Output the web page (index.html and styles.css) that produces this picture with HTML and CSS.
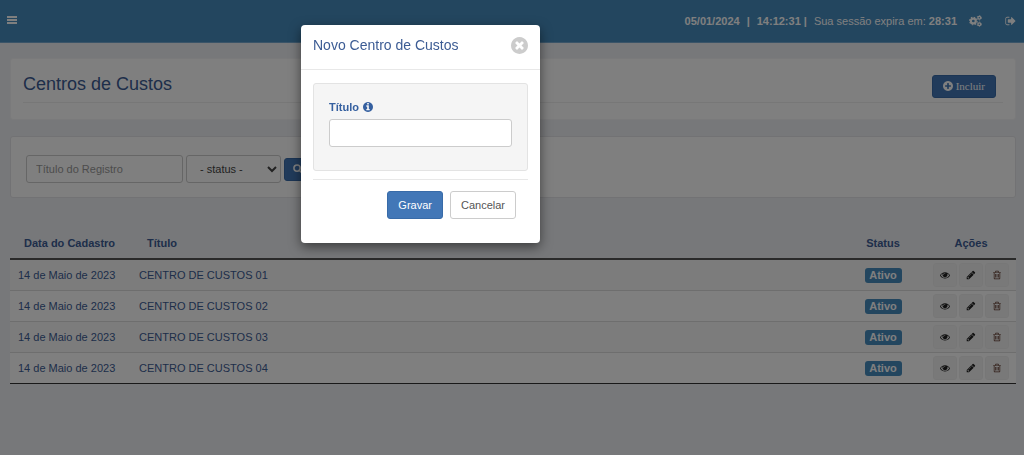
FILE: index.html
```html
<!DOCTYPE html>
<html lang="pt-BR">
<head>
<meta charset="utf-8">
<title>Centros de Custos</title>
<link rel="stylesheet" href="styles.css">
</head>
<body>
<svg class="sprite" aria-hidden="true">
  <symbol id="bars" viewBox="0 0 10 9"><path d="M0 0h10v2H0zM0 3h10v2H0zM0 6h10v2H0z"/></symbol>
  <symbol id="plus" viewBox="128 128 1536 1536"><path d="M1344 960v-128q0-26-19-45t-45-19h-256v-256q0-26-19-45t-45-19h-128q-26 0-45 19t-19 45v256h-256q-26 0-45 19t-19 45v128q0 26 19 45t45 19h256v256q0 26 19 45t45 19h128q26 0 45-19t19-45v-256h256q26 0 45-19t19-45zm320-64q0 209-103 385.5t-279.5 279.5-385.5 103-385.5-103-279.5-279.5-103-385.5 103-385.5 279.5-279.5 385.5-103 385.5 103 279.5 279.5 103 385.5z"/></symbol>
  <symbol id="times" viewBox="128 128 1536 1536"><path d="M1277 1122q0-26-19-45l-181-181 181-181q19-19 19-45 0-27-19-46l-90-90q-19-19-46-19-26 0-45 19l-181 181-181-181q-19-19-45-19-27 0-46 19l-90 90q-19 19-19 46 0 26 19 45l181 181-181 181q-19 19-19 45 0 27 19 46l90 90q19 19 46 19 26 0 45-19l181-181 181 181q19 19 45 19 27 0 46-19l90-90q19-19 19-46zm387-226q0 209-103 385.5t-279.5 279.5-385.5 103-385.5-103-279.5-279.5-103-385.5 103-385.5 279.5-279.5 385.5-103 385.5 103 279.5 279.5 103 385.5z"/></symbol>
  <symbol id="info" viewBox="128 128 1536 1536"><path d="M1152 1376v-160q0-14-9-23t-23-9h-96v-512q0-14-9-23t-23-9h-320q-14 0-23 9t-9 23v160q0 14 9 23t23 9h96v320h-96q-14 0-23 9t-9 23v160q0 14 9 23t23 9h448q14 0 23-9t9-23zm-128-896v-160q0-14-9-23t-23-9h-192q-14 0-23 9t-9 23v160q0 14 9 23t23 9h192q14 0 23-9t9-23zm640 416q0 209-103 385.5t-279.5 279.5-385.5 103-385.5-103-279.5-279.5-103-385.5 103-385.5 279.5-279.5 385.5-103 385.5 103 279.5 279.5 103 385.5z"/></symbol>
  <symbol id="eye" viewBox="0 0 1792 1792"><path d="M1664 960q-152-236-381-353 61 104 61 225 0 185-131.5 316.5t-316.5 131.5-316.5-131.5-131.5-316.5q0-121 61-225-229 117-381 353 133 205 333.5 326.5t434.5 121.5 434.5-121.5 333.5-326.5zm-720-384q0-20-14-34t-34-14q-125 0-214.5 89.5t-89.5 214.5q0 20 14 34t34 14 34-14 14-34q0-86 61-147t147-61q20 0 34-14t14-34zm848 384q0 34-20 69-140 230-376.5 368.5t-499.5 138.5-499.5-139-376.5-368q-20-35-20-69t20-69q140-229 376.5-368t499.5-139 499.5 139 376.5 368q20 35 20 69z"/></symbol>
  <symbol id="pencil" viewBox="0 0 1792 1792"><path d="M491 1536l91-91-235-235-91 91v107h128v128h107zm523-928q0-22-22-22-10 0-17 7l-542 542q-7 7-7 17 0 22 22 22 10 0 17-7l542-542q7-7 7-17zm-54-192l416 416-832 832h-416v-416zm683 96q0 53-37 90l-166 166-416-416 166-165q36-38 90-38 53 0 91 38l235 234q37 39 37 91z"/></symbol>
  <symbol id="trash" viewBox="0 0 1792 1792"><path d="M704 736v576q0 14-9 23t-23 9h-64q-14 0-23-9t-9-23v-576q0-14 9-23t23-9h64q14 0 23 9t9 23zm256 0v576q0 14-9 23t-23 9h-64q-14 0-23-9t-9-23v-576q0-14 9-23t23-9h64q14 0 23 9t9 23zm256 0v576q0 14-9 23t-23 9h-64q-14 0-23-9t-9-23v-576q0-14 9-23t23-9h64q14 0 23 9t9 23zm128 724v-948h-896v948q0 22 7 40.5t14.5 27 10.5 8.5h832q3 0 10.5-8.5t14.5-27 7-40.5zm-672-1076h448l-48-117q-7-9-17-11h-317q-10 2-17 11zm928 32v64q0 14-9 23t-23 9h-96v948q0 83-47 143.5t-113 60.5h-832q-66 0-113-58.5t-47-141.5v-952h-96q-14 0-23-9t-9-23v-64q0-14 9-23t23-9h309l70-167q15-37 54-63t79-26h320q40 0 79 26t54 63l70 167h309q14 0 23 9t9 23z"/></symbol>
  <symbol id="exit" viewBox="64 128 1600 1536"><path d="M704 1440q0 4 1 20t.5 26.5-3 23.5-10 19.5-20.5 6.5h-320q-119 0-203.5-84.5t-84.5-203.5v-704q0-119 84.5-203.5t203.5-84.5h320q13 0 22.5 9.5t9.5 22.5q0 4 1 20t.5 26.5-3 23.5-10 19.5-20.5 6.5h-320q-66 0-113 47t-47 113v704q0 66 47 113t113 47h312l11.5 1 11.5 3 8 5.500 7 9 2 13.500zm928-544q0 26-19 45l-544 544q-19 19-45 19t-45-19-19-45v-288h-448q-26 0-45-19t-19-45v-384q0-26 19-45t45-19h448v-288q0-26 19-45t45-19 45 19l544 544q19 19 19 45z"/></symbol>
  <symbol id="search" viewBox="0 0 16 16"><g fill="none" stroke="currentColor" stroke-width="2.500"><circle cx="6.500" cy="6.500" r="5"/><path d="M10 10l5 5" stroke-linecap="round"/></g></symbol>
  <symbol id="cogs" viewBox="0 0 24 22"><g fill="none" stroke="currentColor"><circle cx="8" cy="11" r="4.500" stroke-width="4"/><circle cx="8" cy="11" r="7" stroke-width="2" stroke-dasharray="2.750"/><circle cx="19" cy="5" r="2.600" stroke-width="2.400"/><circle cx="19" cy="5" r="4.200" stroke-width="1.400" stroke-dasharray="2.200"/><circle cx="19" cy="17" r="2.600" stroke-width="2.400"/><circle cx="19" cy="17" r="4.200" stroke-width="1.400" stroke-dasharray="2.200"/></g></symbol>
</svg>

<header class="topbar">
  <button class="plain" type="button" aria-label="Menu"><svg class="icon-bars"><use href="#bars"/></svg></button>
  <div class="session">
    <b>05/01/2024</b><b>|</b><b>14:12:31 |</b><span>Sua sessão expira em: <b>28:31</b></span>
  </div>
  <a class="top-link" href="#config" aria-label="Configurações"><svg class="icon-cogs"><use href="#cogs"/></svg></a>
  <a class="top-link" href="#sair" aria-label="Sair"><svg class="icon-exit"><use href="#exit"/></svg></a>
</header>

<main class="content">
  <section class="panel heading">
    <div class="heading-row">
      <h1>Centros de Custos</h1>
      <button class="primary include" type="button"><svg class="icon"><use href="#plus"/></svg>Incluir</button>
    </div>
  </section>

  <form class="panel filter">
    <input class="field search-field" type="text" placeholder="Título do Registro" aria-label="Título do Registro">
    <select class="field status-field" aria-label="Status"><option>- status -</option></select>
    <button class="primary search" type="button" aria-label="Pesquisar"><svg class="icon"><use href="#search"/></svg></button>
  </form>

  <table class="records">
    <thead>
      <tr><th class="date">Data do Cadastro</th><th class="name">Título</th><th class="status">Status</th><th class="actions">Ações</th></tr>
    </thead>
    <tbody>
      <tr><td>14 de Maio de 2023</td><td>CENTRO DE CUSTOS 01</td><td class="status"><span class="badge">Ativo</span></td><td class="actions"><div class="tools"><button type="button" aria-label="Ver"><svg class="icon"><use href="#eye"/></svg></button><button type="button" aria-label="Editar"><svg class="icon"><use href="#pencil"/></svg></button><button class="delete" type="button" aria-label="Excluir"><svg class="icon"><use href="#trash"/></svg></button></div></td></tr>
      <tr><td>14 de Maio de 2023</td><td>CENTRO DE CUSTOS 02</td><td class="status"><span class="badge">Ativo</span></td><td class="actions"><div class="tools"><button type="button" aria-label="Ver"><svg class="icon"><use href="#eye"/></svg></button><button type="button" aria-label="Editar"><svg class="icon"><use href="#pencil"/></svg></button><button class="delete" type="button" aria-label="Excluir"><svg class="icon"><use href="#trash"/></svg></button></div></td></tr>
      <tr><td>14 de Maio de 2023</td><td>CENTRO DE CUSTOS 03</td><td class="status"><span class="badge">Ativo</span></td><td class="actions"><div class="tools"><button type="button" aria-label="Ver"><svg class="icon"><use href="#eye"/></svg></button><button type="button" aria-label="Editar"><svg class="icon"><use href="#pencil"/></svg></button><button class="delete" type="button" aria-label="Excluir"><svg class="icon"><use href="#trash"/></svg></button></div></td></tr>
      <tr><td>14 de Maio de 2023</td><td>CENTRO DE CUSTOS 04</td><td class="status"><span class="badge">Ativo</span></td><td class="actions"><div class="tools"><button type="button" aria-label="Ver"><svg class="icon"><use href="#eye"/></svg></button><button type="button" aria-label="Editar"><svg class="icon"><use href="#pencil"/></svg></button><button class="delete" type="button" aria-label="Excluir"><svg class="icon"><use href="#trash"/></svg></button></div></td></tr>
    </tbody>
  </table>
</main>

<div class="backdrop"></div>
<form class="modal" role="dialog" aria-labelledby="modal-title">
  <div class="modal-head">
    <h2 id="modal-title">Novo Centro de Custos</h2>
    <button class="plain close" type="button" aria-label="Fechar"><svg class="icon-close"><use href="#times"/></svg></button>
  </div>
  <div class="modal-body">
    <div class="well">
      <label for="titulo">Título <svg class="icon"><use href="#info"/></svg></label>
      <input class="field" id="titulo" type="text">
    </div>
    <div class="modal-foot">
      <button class="primary" type="button">Gravar</button>
      <button class="secondary" type="button">Cancelar</button>
    </div>
  </div>
</form>
</body>
</html>
```
FILE: styles.css
```css
* { box-sizing: border-box; }

body {
  margin: 0;
  background: #eef0f4;
  color: #3c5c94;
  font: 11px/16px "Liberation Sans", Arial, sans-serif;
}

button, input, select { font: inherit; }
button { cursor: pointer; }
svg { display: block; fill: currentColor; }
h1, h2 { margin: 0; font-weight: 400; }

.sprite { position: absolute; width: 0; height: 0; }
.icon { width: 10px; height: 10px; }
.icon-bars { width: 10px; height: 9px; }
.icon-cogs { width: 13px; height: 12px; }
.icon-exit { width: 11px; height: 10px; }
.icon-close { width: 17px; height: 17px; }

.plain { padding: 0; border: 0; background: none; color: inherit; }

.topbar {
  display: flex;
  align-items: center;
  height: 43px;
  padding: 0 8px 1px 7px;
  border-bottom: 1px solid #75a9d0;
  background: #468cbe;
  color: #fff;
}
.session { display: flex; gap: 7px; margin-left: auto; }
.top-link { margin-left: 12px; color: inherit; }
.top-link + .top-link { margin-left: 23px; }

.content { padding: 15px 8px 16px 10px; }

.panel { border: 1px solid #f4f5f7; border-radius: 3px; background: #fff; }
.heading { padding: 11px 12px 16px; }
.heading-row {
  display: flex;
  align-items: center;
  justify-content: space-between;
  height: 33px;
  padding-right: 7px;
  border-bottom: 1px solid #eee;
}
.heading h1 { padding-bottom: 4px; font-size: 18px; line-height: 24px; }

.primary, .secondary {
  border: 1px solid #386ba8;
  border-radius: 3px;
  background: #4277b7;
  color: #fff;
}
.secondary { border-color: #ccc; background: #fff; color: #555; }
.include {
  display: flex;
  align-items: center;
  gap: 3px;
  height: 23px;
  padding: 0 10px;
  font-family: "Liberation Serif", serif;
}

.filter {
  display: flex;
  align-items: center;
  gap: 3px;
  margin-top: 16px;
  padding: 18px 15px 14px;
  border-color: #e4e5e8;
}
.field {
  height: 28px;
  padding: 0 9px;
  border: 1px solid #ccc;
  border-radius: 3px;
  background: #fff;
  color: #555;
}
.field::placeholder { color: #999; opacity: 1; }
.search-field { width: 157px; }
.status-field { width: 95px; padding: 0 0 0 9px; color: #444; }
.search { height: 23px; padding: 0 8px; }

.records { width: 100%; margin-top: 30px; border-collapse: separate; border-spacing: 0; }
.records th { height: 32px; padding: 0; border-bottom: 2px solid #555; text-align: left; }
.records .date { width: 121px; padding-left: 14px; }
.records .name { padding-left: 16px; }
.records .status { width: 70px; text-align: center; }
.records .actions { width: 98px; padding-right: 0; text-align: center; }
.records th.actions { padding-left: 8px; }
.records td { height: 31px; padding: 0 8px; border-bottom: 1px solid #ddd; background: #fff; }
.records tbody tr:nth-child(odd) td { background: #f9f9f9; }
.records tbody tr:last-child td { border-bottom-color: #333; }
.badge {
  display: block;
  width: 37px;
  margin: 1px auto 0;
  border-radius: 3px;
  background: #468cbe;
  color: #fff;
  font-weight: 700;
  line-height: 15px;
}
.tools { display: flex; justify-content: center; gap: 2px; }
.tools button {
  display: grid;
  place-items: center;
  width: 24px;
  height: 24px;
  padding: 0;
  border: 1px solid #efefef;
  border-radius: 3px;
  background: #f3f3f3;
  color: #222;
}
.tools .delete { color: #5c3528; }

.backdrop { position: fixed; inset: 0; background: rgba(0, 0, 0, .5); }
.modal {
  position: absolute;
  top: 25px;
  left: 301px;
  width: 239px;
  border-radius: 4px;
  background: #fff;
  box-shadow: 0 4px 12px rgba(0, 0, 0, .5);
}
.modal-head {
  display: flex;
  align-items: center;
  justify-content: space-between;
  height: 45px;
  padding: 0 12px 4px;
  border-bottom: 1px solid #e8e8e8;
}
.modal-head h2 { font-size: 14px; }
.close { color: #ccc; }
.modal-body { padding: 13px 12px 24px; }
.well { padding: 15px; border: 1px solid #e3e3e3; border-radius: 3px; background: #f5f5f5; }
.well label { display: flex; align-items: center; gap: 4px; margin-bottom: 4px; color: #3560a0; font-weight: 700; }
.well .field { display: block; width: 100%; margin-bottom: 8px; }
.modal-foot {
  display: flex;
  justify-content: flex-end;
  gap: 7px;
  margin-top: 8px;
  padding: 11px 12px 0 0;
  border-top: 1px solid #e8e8e8;
}
.modal-foot button { height: 28px; padding: 0 10px; }
```
